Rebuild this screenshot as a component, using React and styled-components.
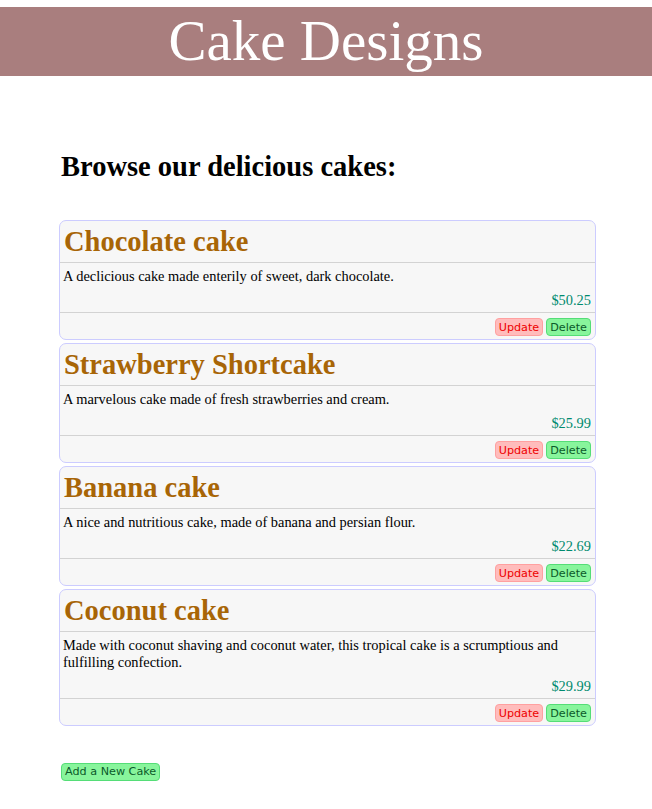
import React from "react";
import styled, { createGlobalStyle } from "styled-components";

const cakes = [
  {
    name: "Chocolate cake",
    description: "A declicious cake made enterily of sweet, dark chocolate.",
    price: "$50.25",
  },
  {
    name: "Strawberry Shortcake",
    description: "A marvelous cake made of fresh strawberries and cream.",
    price: "$25.99",
  },
  {
    name: "Banana cake",
    description: "A nice and nutritious cake, made of banana and persian flour.",
    price: "$22.69",
  },
  {
    name: "Coconut cake",
    description:
      "Made with coconut shaving and coconut water, this tropical cake is a scrumptious and fulfilling confection.",
    price: "$29.99",
  },
];

function App() {
  return (
    <>
      <GlobalStyle />
      <Header>
        <h1>Cake Designs</h1>
      </Header>
      <Main>
        <Heading>Browse our delicious cakes:</Heading>
        <CakeList>
          {cakes.map((cake) => (
            <Card key={cake.name}>
              <CardTitle>{cake.name}</CardTitle>
              <CardBody>
                <p>{cake.description}</p>
                <Price>{cake.price}</Price>
              </CardBody>
              <CardFooter>
                <Button variant="update">Update</Button>
                <Button variant="delete">Delete</Button>
              </CardFooter>
            </Card>
          ))}
        </CakeList>
        <AddRow>
          <Button variant="delete">Add a New Cake</Button>
        </AddRow>
      </Main>
    </>
  );
}

const GlobalStyle = createGlobalStyle`
  body {
    margin: 0;
    background: #fff;
    font-family: "Liberation Serif", "Times New Roman", serif;
  }
`;

const Header = styled.header`
  margin-top: 7px;
  height: 69px;
  background: #a97e7e;
  display: flex;
  align-items: center;
  justify-content: center;

  h1 {
    margin: 0;
    color: #fff;
    font-weight: normal;
    font-size: 57px;
    line-height: 1;
    position: relative;
    top: -1px;
  }
`;

const Main = styled.main`
  width: 537px;
  padding: 0 0 0 59px;
`;

const Heading = styled.h2`
  margin: 76px 0 38px 2px;
  font-size: 28.5px;
  line-height: 30px;
  font-weight: bold;
`;

const CakeList = styled.div`
  display: flex;
  flex-direction: column;
  gap: 3px;
`;

const Card = styled.div`
  border: 1px solid #ccccff;
  border-radius: 7px;
  background: #f7f7f7;
`;

const CardTitle = styled.h3`
  margin: 0;
  height: 40px;
  padding: 1px 4px 0;
  display: flex;
  align-items: center;
  font-size: 28.5px;
  font-weight: bold;
  color: #a86506;
  border-bottom: 1px solid #d3d3d3;
`;

const CardBody = styled.div`
  padding: 5px 4px 3px 3px;
  border-bottom: 1px solid #d3d3d3;
  font-size: 14.4px;
  line-height: 17px;

  p {
    margin: 0 0 7px;
  }
`;

const Price = styled.div`
  text-align: right;
  color: #008a6e;
  font-size: 14.4px;
  line-height: 17px;
`;

const CardFooter = styled.div`
  display: flex;
  justify-content: flex-end;
  gap: 3px;
  padding: 5px 4px 3px;
`;

const Button = styled.button`
  height: 18px;
  padding: 0 3px;
  font-family: "DejaVu Sans", Verdana, sans-serif;
  font-size: 11.2px;
  border-radius: 4px;
  cursor: pointer;
  border: 1px solid ${(p) => (p.variant === "update" ? "#ffa0a0" : "#55dd77")};
  background: ${(p) => (p.variant === "update" ? "#ffbcbc" : "#88f59c")};
  color: ${(p) => (p.variant === "update" ? "#ee0000" : "#0b5a2a")};
`;

const AddRow = styled.div`
  margin: 35px 0 0 2px;
`;

export default App;
